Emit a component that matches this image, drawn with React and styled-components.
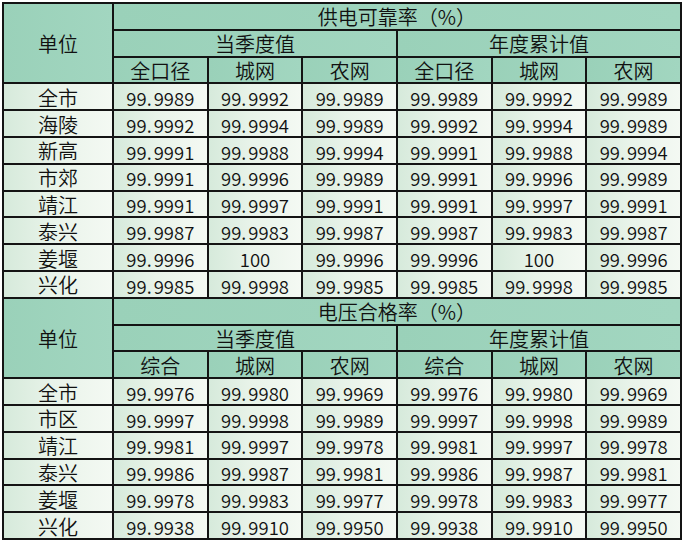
import React from "react";
import styled, { createGlobalStyle } from "styled-components";

const Global = createGlobalStyle`
  html, body { margin: 0; padding: 0; background: #ffffff; }
  body { font-family: "Noto Sans CJK SC", "Noto Sans", sans-serif; }
`;

const Page = styled.div`
  padding: 2px 0 0 2px;
`;

const Grid = styled.div`
  display: grid;
  width: max-content;
  grid-template-columns: 108px repeat(6, 92.67px);
  grid-auto-rows: 24.8px;
  gap: 2px;
  padding: 2px;
  background: #141414;
`;

const Cell = styled.div`
  display: flex;
  align-items: center;
  justify-content: center;
  font-size: ${(p) => (p.$num ? "18.5px" : "20px")};
  font-weight: 350;
  line-height: 1;
  color: #111111;
  white-space: nowrap;
  background: ${(p) =>
    p.$head
      ? "linear-gradient(90deg, #9ad1b9 0%, #a2d6c0 100%)"
      : "linear-gradient(90deg, #d6eadb 0%, #e8f3e9 45%, #f4f9f3 100%)"};
  grid-column: ${(p) => p.$col || "auto"};
  grid-row: ${(p) => p.$row || "auto"};
  padding-top: ${(p) => (p.$num ? "3px" : "2px")};
`;

const Dot = styled.span`
  margin-right: 2px;
`;

const reliability = [
  ["全市", "99.9989", "99.9992", "99.9989", "99.9989", "99.9992", "99.9989"],
  ["海陵", "99.9992", "99.9994", "99.9989", "99.9992", "99.9994", "99.9989"],
  ["新高", "99.9991", "99.9988", "99.9994", "99.9991", "99.9988", "99.9994"],
  ["市郊", "99.9991", "99.9996", "99.9989", "99.9991", "99.9996", "99.9989"],
  ["靖江", "99.9991", "99.9997", "99.9991", "99.9991", "99.9997", "99.9991"],
  ["泰兴", "99.9987", "99.9983", "99.9987", "99.9987", "99.9983", "99.9987"],
  ["姜堰", "99.9996", "100", "99.9996", "99.9996", "100", "99.9996"],
  ["兴化", "99.9985", "99.9998", "99.9985", "99.9985", "99.9998", "99.9985"],
];

const voltage = [
  ["全市", "99.9976", "99.9980", "99.9969", "99.9976", "99.9980", "99.9969"],
  ["市区", "99.9997", "99.9998", "99.9989", "99.9997", "99.9998", "99.9989"],
  ["靖江", "99.9981", "99.9997", "99.9978", "99.9981", "99.9997", "99.9978"],
  ["泰兴", "99.9986", "99.9987", "99.9981", "99.9986", "99.9987", "99.9981"],
  ["姜堰", "99.9978", "99.9983", "99.9977", "99.9978", "99.9983", "99.9977"],
  ["兴化", "99.9938", "99.9910", "99.9950", "99.9938", "99.9910", "99.9950"],
];

function Num({ v }) {
  const i = v.indexOf(".");
  if (i < 0) return v;
  return (
    <>
      {v.slice(0, i)}
      <Dot>.</Dot>
      {v.slice(i + 1)}
    </>
  );
}

function Section({ start, title, cols, rows }) {
  const r = start;
  return (
    <>
      <Cell $head $col="1" $row={`${r} / span 3`}>单位</Cell>
      <Cell $head $col="2 / span 6" $row={`${r}`}>{title}</Cell>
      <Cell $head $col="2 / span 3" $row={`${r + 1}`}>当季度值</Cell>
      <Cell $head $col="5 / span 3" $row={`${r + 1}`}>年度累计值</Cell>
      {[...cols, ...cols].map((c, i) => (
        <Cell key={"h" + i} $head $col={`${i + 2}`} $row={`${r + 2}`}>{c}</Cell>
      ))}
      {rows.map((row, ri) =>
        row.map((v, ci) => (
          <Cell key={ri + "-" + ci} $num={ci > 0} $col={`${ci + 1}`} $row={`${r + 3 + ri}`}>
            {ci > 0 ? <Num v={v} /> : v}
          </Cell>
        ))
      )}
    </>
  );
}

export default function App() {
  return (
    <Page>
      <Global />
      <Grid>
        <Section start={1} title="供电可靠率（%）" cols={["全口径", "城网", "农网"]} rows={reliability} />
        <Section start={12} title="电压合格率（%）" cols={["综合", "城网", "农网"]} rows={voltage} />
      </Grid>
    </Page>
  );
}
